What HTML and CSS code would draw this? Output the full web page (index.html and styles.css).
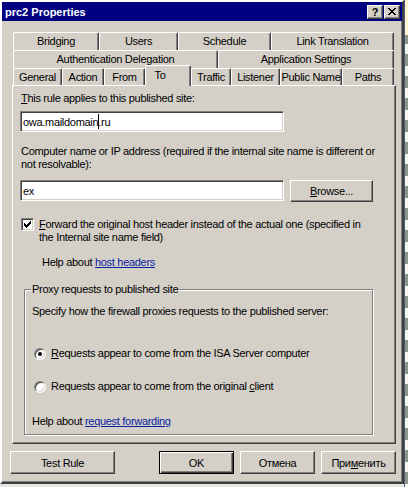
FILE: index.html
```html
<!DOCTYPE html>
<html lang="en">
  <head>
    <meta charset="UTF-8" />
    <meta name="viewport" content="width=device-width, initial-scale=1.0" />
    <title>prc2 Properties</title>
    <link rel="stylesheet" href="styles.css">
  </head>
  <body>
    <div class="window">
      <div class="titlebar">
        <span class="title">prc2 Properties</span>
        <div class="title-btns">
          <span class="tbtn help-btn">?</span>
          <span class="tbtn">
            <svg width="8" height="7" viewBox="0 0 8 7"><path d="M0 0h2v1h-2z M6 0h2v1h-2z M1 1h2v1h-2z M5 1h2v1h-2z M2 2h4v1h-4z M3 3h2v1h-2z M2 4h4v1h-4z M1 5h2v1h-2z M5 5h2v1h-2z M0 6h2v1h-2z M6 6h2v1h-2z" fill="#000"/></svg>
          </span>
        </div>
      </div>

      <div class="content">
        <div class="tabs">
          <div class="tab-row row1">
            <div class="tab">Bridging</div>
            <div class="tab">Users</div>
            <div class="tab">Schedule</div>
            <div class="tab">Link Translation</div>
          </div>
          <div class="tab-row row2">
            <div class="tab">Authentication Delegation</div>
            <div class="tab">Application Settings</div>
          </div>
          <div class="tab-row row3">
            <div class="tab">General</div>
            <div class="tab">Action</div>
            <div class="tab">From</div>
            <div class="tab selected">To</div>
            <div class="tab">Traffic</div>
            <div class="tab">Listener</div>
            <div class="tab">Public Name</div>
            <div class="tab">Paths</div>
          </div>
        </div>

        <div class="panel">
          <div class="label"><u>T</u>his rule applies to this published site:</div>
          <div class="field field-site">owa.maildomain<span class="caret"></span>.ru</div>

          <div class="label label-computer">Computer name or IP address (required if the internal site name is different or<br>not resolvable):</div>
          <div class="field-row">
            <div class="field">ex</div>
            <div class="btn browse"><u>B</u>rowse...</div>
          </div>

          <div class="check-row">
            <span class="checkbox">
              <svg width="7" height="7" viewBox="0 0 7 7"><path d="M6 0h1v1h-1z M5 1h2v1h-2z M0 2h1v1h-1z M4 2h3v1h-3z M0 3h2v1h-2z M3 3h3v1h-3z M0 4h5v1h-5z M1 5h3v1h-3z M2 6h1v1h-1z" fill="#000"/></svg>
            </span>
            <span class="check-text"><u>F</u>orward the original host header instead of the actual one (specified in<br>the Internal site name field)</span>
          </div>

          <div class="help help-host">Help about <a href="#">host headers</a></div>

          <fieldset class="group">
            <legend>Proxy requests to published site</legend>
            <div class="group-text">Specify how the firewall proxies requests to the published server:</div>
            <div class="radio-row first">
              <span class="radio on"></span>
              <span><u>R</u>equests appear to come from the ISA Server computer</span>
            </div>
            <div class="radio-row">
              <span class="radio"></span>
              <span>Requests appear to come from the original <u>c</u>lient</span>
            </div>
            <div class="help help-forward">Help about <a href="#">request forwarding</a></div>
          </fieldset>
        </div>

        <div class="actions">
          <div class="btn test">Test Rule</div>
          <div class="btn default">OK</div>
          <div class="btn">Отмена</div>
          <div class="btn">При<u>м</u>енить</div>
        </div>
      </div>
    </div>
    <div class="edge"></div>
  </body>
</html>
```

FILE: styles.css
```css
* {
  margin: 0;
  padding: 0;
  box-sizing: border-box;
}
body {
  width: 408px;
  height: 487px;
  overflow: hidden;
  display: flex;
  background: #e6e6e2;
  font-family: "Liberation Sans", Arial, sans-serif;
  font-size: 11px;
  letter-spacing: -0.3px;
  color: #000;
}

/* window frame */
.window {
  width: 404px;
  height: 484px;
  display: flex;
  flex-direction: column;
  background: #d4d0c8;
  border: 2px solid;
  border-color: #fff #404040 #404040 #fff;
  box-shadow: inset -1px -1px #808080;
}
.titlebar {
  height: 19px;
  flex: none;
  display: flex;
  align-items: center;
  justify-content: space-between;
  padding: 0 2px 0 3px;
  background: #000080;
  color: #fff;
}
.title {
  font-weight: bold;
  font-size: 11px;
  letter-spacing: 0;
}
.title-btns {
  display: flex;
  gap: 1px;
}
.tbtn {
  width: 16px;
  height: 14px;
  display: flex;
  align-items: center;
  justify-content: center;
  background: #d4d0c8;
  border: 1px solid;
  border-color: #fff #404040 #404040 #fff;
  box-shadow: inset -1px -1px #808080;
  color: #000;
}
.help-btn {
  font-weight: bold;
  font-size: 11px;
  line-height: 12px;
}

.content {
  flex: 1;
  display: flex;
  flex-direction: column;
  padding: 11px 6px 0 8px;
}

/* tabs */
.tabs {
  margin-left: 3px;
  width: 381px;
}
.tab-row {
  display: flex;
  height: 18px;
}
.tab-row.row3 {
  height: 17px;
}
.tab {
  flex: none;
  height: 18px;
  text-align: center;
  line-height: 16px;
  white-space: nowrap;
  background: #d4d0c8;
  border-top: 1px solid #fff;
  border-left: 1px solid #fff;
  border-right: 1px solid #404040;
  border-radius: 2px 2px 0 0;
  box-shadow: inset -1px 0 #808080;
}
.row1 .tab:nth-child(1) { width: 86px; }
.row1 .tab:nth-child(2) { width: 79px; }
.row1 .tab:nth-child(3) { width: 93px; }
.row1 .tab:nth-child(4) { width: 123px; }
.row2 .tab:nth-child(1) { width: 205px; }
.row2 .tab:nth-child(2) { width: 176px; }
.row3 .tab:nth-child(1) { width: 49px; }
.row3 .tab:nth-child(2) { width: 42px; }
.row3 .tab:nth-child(3) { width: 41px; }
.row3 .tab:nth-child(4) { width: 46px; }
.row3 .tab:nth-child(5) { width: 40px; }
.row3 .tab:nth-child(6) { width: 49px; }
.row3 .tab:nth-child(7) { width: 62px; }
.row3 .tab:nth-child(8) { width: 52px; }
.row3 .tab {
  height: 17px;
}
.tab.selected {
  height: 21px;
  margin-top: -3px;
  margin-bottom: -1px;
  padding-right: 16px;
  line-height: 18px;
  position: relative;
  z-index: 1;
}

/* page */
.panel {
  height: 359px;
  margin-left: 2px;
  padding: 6px 8px 0 8px;
  border: 1px solid;
  border-color: #fff #404040 #404040 #fff;
  box-shadow: inset -1px -1px #808080;
}
.label {
  line-height: 13px;
  white-space: nowrap;
}
.label-computer {
  margin-top: 13px;
}
.field {
  width: 264px;
  height: 21px;
  margin-left: -1px;
  padding: 0 2px;
  display: flex;
  align-items: center;
  background: #fff;
  border: 1px solid;
  border-color: #808080 #fff #fff #808080;
  box-shadow: inset 1px 1px #404040, inset -1px -1px #d4d0c8;
}
.field-site {
  margin-top: 6px;
}
.caret {
  display: inline-block;
  width: 0;
  height: 15px;
  border-left: 1px solid #000;
  margin-right: -1px;
}
.field-row {
  display: flex;
  gap: 6px;
  margin-top: 9px;
}
.btn {
  width: 75px;
  height: 23px;
  display: flex;
  align-items: center;
  justify-content: center;
  background: #d4d0c8;
  border: 1px solid;
  border-color: #fff #404040 #404040 #fff;
  box-shadow: inset -1px -1px #808080;
}
.btn.browse {
  width: 83px;
  height: 22px;
}
.check-row {
  display: flex;
  gap: 5px;
  margin-top: 16px;
  line-height: 13px;
  white-space: nowrap;
}
.checkbox {
  width: 13px;
  height: 13px;
  flex: none;
  display: flex;
  align-items: center;
  justify-content: center;
  background: #fff;
  border: 1px solid;
  border-color: #808080 #fff #fff #808080;
  box-shadow: inset 1px 1px #404040, inset -1px -1px #d4d0c8;
}
.help {
  line-height: 13px;
}
.help a {
  color: #0a22a0;
  text-decoration: underline;
}
.help-host {
  margin-top: 12px;
  padding-left: 21px;
}

/* group box */
.group {
  width: 349px;
  margin: 14px 0 0 3px;
  padding: 9px 6px 6px 7px;
  border: 1px solid #808080;
  box-shadow: inset 1px 1px #fff, 1px 1px #fff;
}
.group legend {
  margin-left: -1px;
  padding: 0 1px;
  line-height: 13px;
  background: #d4d0c8;
}
.group-text {
  line-height: 13px;
}
.radio-row {
  display: flex;
  align-items: center;
  gap: 5px;
  margin: 20px 0 0 2px;
  line-height: 13px;
}
.radio-row.first {
  margin-top: 29px;
}
.radio {
  width: 12px;
  height: 12px;
  flex: none;
  display: flex;
  align-items: center;
  justify-content: center;
  border-radius: 50%;
  background: #fff;
  border: 1px solid;
  border-color: #808080 #fff #fff #808080;
  box-shadow: inset 1px 1px #404040, inset -1px -1px #d4d0c8;
}
.radio.on::after {
  content: "";
  width: 4px;
  height: 4px;
  border-radius: 50%;
  background: #000;
}
.help-forward {
  margin-top: 22px;
}

/* bottom buttons */
.actions {
  display: flex;
  gap: 6px;
  margin-top: 7px;
}
.btn.test {
  width: 105px;
  margin-right: auto;
}
.btn.default {
  border-color: #000;
  box-shadow: inset 1px 1px #fff, inset -1px -1px #404040, inset -2px -2px #808080;
}

.edge {
  flex: 1;
  height: 487px;
  border-left: 1px solid #4a5a7a;
  background: linear-gradient(#fdf6cf 0 35px, transparent 35px),
    repeating-linear-gradient(#f4f4f0 0 10px, #8c968c 10px 22px);
}
```
